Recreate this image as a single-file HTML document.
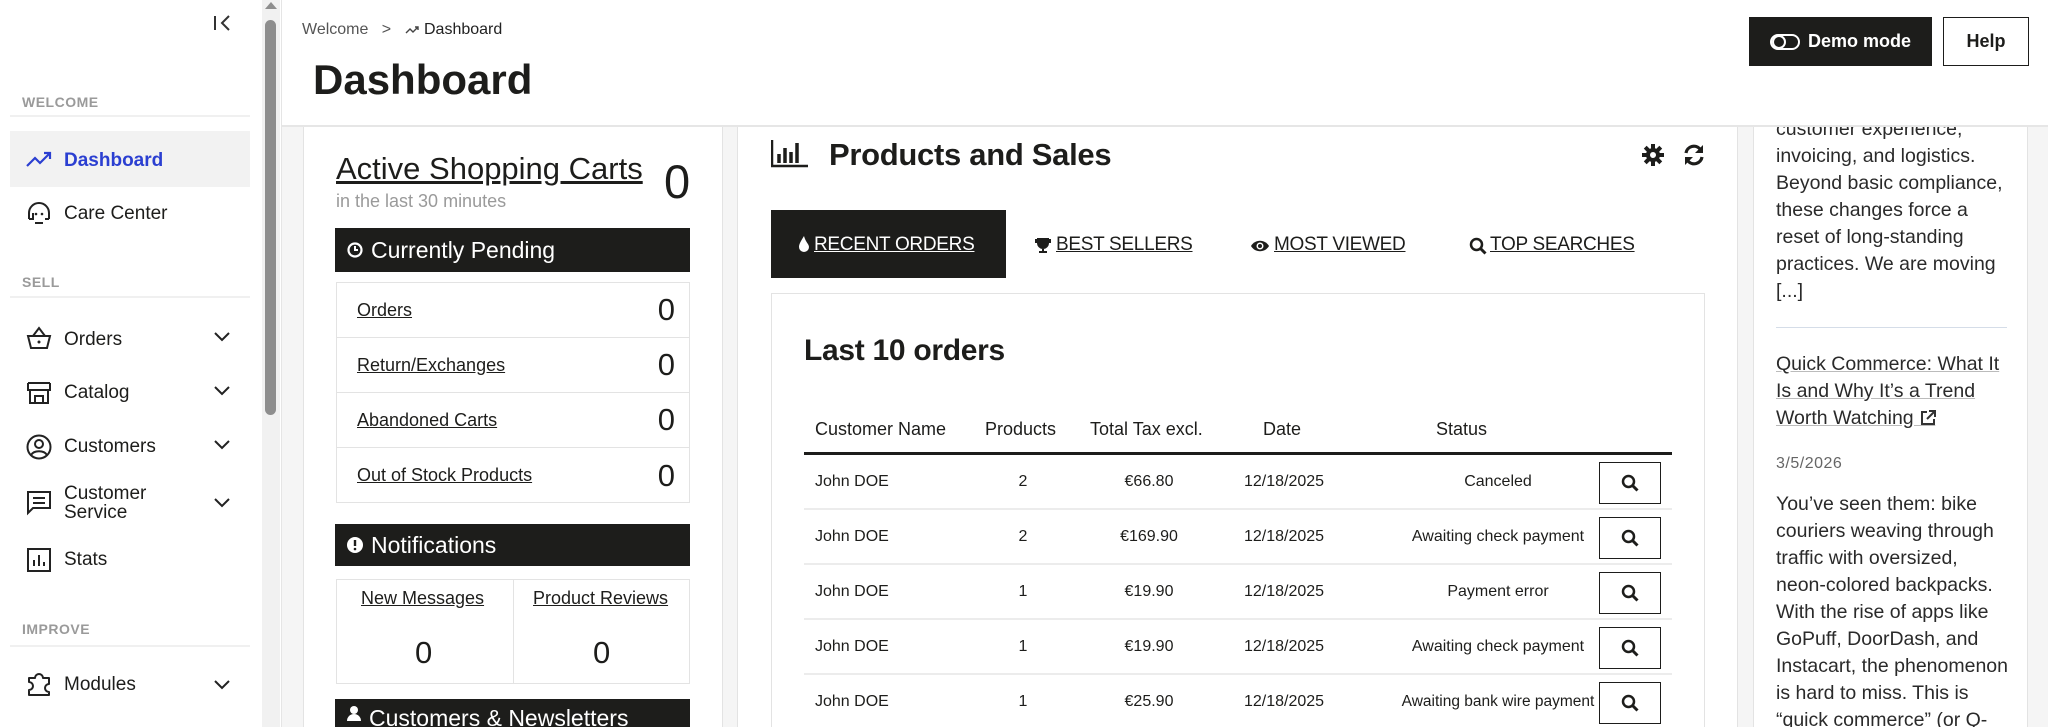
<!DOCTYPE html>
<html style="overflow:hidden"><head><meta charset="utf-8"><style>
*{box-sizing:border-box;margin:0;padding:0}
html,body{overflow:hidden}
body{width:2048px;height:727px;font-family:"Liberation Sans",sans-serif;color:#1d1d1b;background:#f5f5f5;position:relative}
.a{position:absolute}
.side{left:0;top:0;width:282px;height:727px;background:#fff;border-right:1px solid #e5e5e5}
.sec{left:22px;font-size:14px;font-weight:bold;color:#9a9a9a;letter-spacing:.5px}
.hr{left:10px;width:240px;height:2px;background:#f0f0f0}
.it{left:64px;font-size:19px;color:#1d1d1b}
.ic{left:25px}
.chev{left:213px}
.hdr{left:282px;top:0;width:1766px;height:127px;background:#fff;border-bottom:2px solid #e6e6e6}
.panel{background:#fff;border-left:1px solid #e3e3e3;border-right:1px solid #e3e3e3}
.bar{background:#1d1d1b;color:#fff;font-size:23px;padding-left:12px;display:flex;align-items:center;gap:8px}
.box{border:1px solid #e3e3e3;background:#fff}
.row{height:55px;border-bottom:1px solid #e3e3e3;display:flex;align-items:center;justify-content:space-between;padding:0 14px 0 20px}
.row a{font-size:18px;color:#1d1d1b;text-decoration:underline}
.row span{font-size:31px}
.tab{font-size:19px;text-decoration:underline;top:232px;color:#1d1d1b;letter-spacing:-.3px}
.tr{position:absolute;left:804px;width:868px;height:55px;border-bottom:2px solid #ececec;font-size:16px}
.tr div{position:absolute;top:0;line-height:54px;transform:translateX(-50%);white-space:nowrap}
.btn{position:absolute;left:795px;top:7px;width:62px;height:42px;border:1.5px solid #1d1d1b;display:flex;align-items:center;justify-content:center}
.rt{left:1776px;font-size:19.5px;line-height:27px;color:#2a2a2a;width:250px}
</style></head><body>

<!-- sidebar -->
<div class="a side"></div>
<svg class="a" style="left:212px;top:14px" width="20" height="18"><path d="M3 2v14M17 2l-7 7 7 7" stroke="#333" stroke-width="2" fill="none"/></svg>
<div class="a" style="left:262px;top:0;width:18px;height:727px;background:#f1f1f1"></div>
<div class="a" style="left:265px;top:20px;width:11px;height:395px;border-radius:6px;background:#8e8e8e"></div>
<svg class="a" style="left:263px;top:0" width="16" height="10"><path d="M2 9L8 2l6 7z" fill="#8e8e8e"/></svg>

<div class="a sec" style="top:94px">WELCOME</div>
<div class="a hr" style="top:115px"></div>
<div class="a" style="left:10px;top:131px;width:240px;height:56px;background:#f2f2f2"></div>
<svg class="a ic" style="top:150px" width="28" height="20"><path d="M2 16l8-8 5 5 10-10M19 3h6v6" stroke="#2b3fd1" stroke-width="2.2" fill="none"/></svg>
<div class="a it" style="top:150px;color:#2b3fd1;font-weight:bold">Dashboard</div>
<svg class="a ic" style="top:199px" width="28" height="28"><path d="M4 20v-6a10 10 0 0 1 20 0v6M4 20h4v-6M24 20h-4M10 24h8" stroke="#222" stroke-width="2" fill="none"/><circle cx="11" cy="15" r="1.3" fill="#222"/><circle cx="17" cy="15" r="1.3" fill="#222"/></svg>
<div class="a it" style="top:203px">Care Center</div>

<div class="a sec" style="top:274px">SELL</div>
<div class="a hr" style="top:296px"></div>
<svg class="a ic" style="top:325px" width="28" height="26"><path d="M3 11h22l-3 12H6z M8 11l6-8 6 8" stroke="#222" stroke-width="2" fill="none"/><circle cx="14" cy="17" r="1.5" fill="#222"/></svg>
<div class="a it" style="top:329px">Orders</div>
<svg class="a ic" style="top:379px" width="28" height="26"><path d="M3 4h22M3 4l-0 7h22V4M5 11v13h18V11M10 24v-7h8v7" stroke="#222" stroke-width="2" fill="none"/></svg>
<div class="a it" style="top:382px">Catalog</div>
<svg class="a ic" style="top:433px" width="28" height="28"><circle cx="14" cy="14" r="11.5" stroke="#222" stroke-width="2" fill="none"/><circle cx="14" cy="11" r="4" stroke="#222" stroke-width="2" fill="none"/><path d="M6 22c3-5 13-5 16 0" stroke="#222" stroke-width="2" fill="none"/></svg>
<div class="a it" style="top:436px">Customers</div>
<svg class="a ic" style="top:489px" width="28" height="28"><path d="M3 3h22v16H8l-5 5z M8 9h12M8 14h12" stroke="#222" stroke-width="2" fill="none"/></svg>
<div class="a it" style="top:484px;line-height:19px">Customer<br>Service</div>
<svg class="a ic" style="top:546px" width="28" height="28"><rect x="3" y="3" width="22" height="22" stroke="#222" stroke-width="2" fill="none"/><path d="M9 20v-6M14 20V9M19 20v-4" stroke="#222" stroke-width="2"/></svg>
<div class="a it" style="top:549px">Stats</div>
<div class="a sec" style="top:621px">IMPROVE</div>
<div class="a hr" style="top:645px"></div>
<svg class="a ic" style="top:670px" width="28" height="28"><path d="M4 8h6a4 4 0 0 1 8 0h6v6a4 4 0 0 0 0 8v3H4v-5a4 4 0 0 0 0-8z" stroke="#222" stroke-width="2" fill="none" stroke-linejoin="round"/></svg>
<div class="a it" style="top:674px">Modules</div>
<svg class="a chev" style="top:331px" width="18" height="12"><path d="M2 2l7 7 7-7" stroke="#222" stroke-width="2" fill="none"/></svg>
<svg class="a chev" style="top:385px" width="18" height="12"><path d="M2 2l7 7 7-7" stroke="#222" stroke-width="2" fill="none"/></svg>
<svg class="a chev" style="top:439px" width="18" height="12"><path d="M2 2l7 7 7-7" stroke="#222" stroke-width="2" fill="none"/></svg>
<svg class="a chev" style="top:497px" width="18" height="12"><path d="M2 2l7 7 7-7" stroke="#222" stroke-width="2" fill="none"/></svg>
<svg class="a chev" style="top:679px" width="18" height="12"><path d="M2 2l7 7 7-7" stroke="#222" stroke-width="2" fill="none"/></svg>

<!-- panels -->
<div class="a panel" style="left:303px;top:0;width:420px;height:727px"></div>
<div class="a panel" style="left:737px;top:0;width:1001px;height:727px"></div>
<div class="a panel" style="left:1753px;top:0;width:275px;height:727px"></div>

<!-- left column -->
<div class="a" style="left:336px;top:151px;font-size:31px;text-decoration:underline">Active Shopping Carts</div>
<div class="a" style="left:664px;top:154px;font-size:47px">0</div>
<div class="a" style="left:336px;top:191px;font-size:18px;color:#9a9a9a">in the last 30 minutes</div>
<div class="a bar" style="left:335px;top:228px;width:355px;height:44px"><svg width="16" height="16"><circle cx="8" cy="8" r="6.5" stroke="#fff" stroke-width="2.2" fill="none"/><path d="M8 4v4h3" stroke="#fff" stroke-width="2" fill="none"/></svg>Currently Pending</div>
<div class="a box" style="left:336px;top:282px;width:354px;height:221px">
<div class="row"><a>Orders</a><span>0</span></div>
<div class="row"><a>Return/Exchanges</a><span>0</span></div>
<div class="row"><a>Abandoned Carts</a><span>0</span></div>
<div class="row" style="border:0"><a>Out of Stock Products</a><span>0</span></div>
</div>
<div class="a bar" style="left:335px;top:524px;width:355px;height:42px"><svg width="16" height="16"><circle cx="8" cy="8" r="8" fill="#fff"/><path d="M8 3v6" stroke="#1d1d1b" stroke-width="2.4"/><circle cx="8" cy="12" r="1.3" fill="#1d1d1b"/></svg>Notifications</div>
<div class="a box" style="left:336px;top:579px;width:354px;height:105px">
<div class="a" style="left:176px;top:0;width:1px;height:103px;background:#e3e3e3"></div>
<div class="a" style="left:24px;top:8px;font-size:18px;text-decoration:underline">New Messages</div>
<div class="a" style="left:196px;top:8px;font-size:18px;text-decoration:underline">Product Reviews</div>
<div class="a" style="left:78px;top:55px;font-size:31px">0</div>
<div class="a" style="left:256px;top:55px;font-size:31px">0</div>
</div>
<div class="a bar" style="left:335px;top:699px;width:355px;height:40px;align-items:flex-start;padding-top:6px"><svg width="14" height="16"><circle cx="7" cy="5" r="4" fill="#fff"/><path d="M0 16a7 7 0 0 1 14 0z" fill="#fff"/></svg>Customers &amp; Newsletters</div>

<!-- middle column -->
<svg class="a" style="left:771px;top:140px" width="38" height="28"><path d="M1 0v26h36" stroke="#1d1d1b" stroke-width="2.5" fill="none"/><path d="M8 14v9M14 8v15M20 12v11M26 3v20" stroke="#1d1d1b" stroke-width="3.5"/></svg>
<div class="a" style="left:829px;top:137px;font-size:31px;font-weight:bold;letter-spacing:-.3px">Products and Sales</div>
<svg class="a" style="left:1642px;top:144px" width="22" height="22" viewBox="0 0 22 22"><g fill="#1d1d1b"><circle cx="11" cy="11" r="7"/><rect x="9" y="0" width="4" height="22"/><rect x="0" y="9" width="22" height="4"/><rect x="9" y="0" width="4" height="22" transform="rotate(45 11 11)"/><rect x="9" y="0" width="4" height="22" transform="rotate(-45 11 11)"/></g><circle cx="11" cy="11" r="3" fill="#fff"/></svg>
<svg class="a" style="left:1682px;top:143px" width="24" height="24" viewBox="0 0 24 24"><path d="M4 10a8 8 0 0 1 14-4M20 14a8 8 0 0 1-14 4" stroke="#1d1d1b" stroke-width="3.2" fill="none"/><path d="M21 2v8h-8zM3 22v-8h8z" fill="#1d1d1b"/></svg>
<div class="a" style="left:771px;top:210px;width:235px;height:68px;background:#1d1d1b"></div>
<svg class="a" style="left:798px;top:236px" width="12" height="16"><path d="M6 0C3 5 1 8 1 11a5 5 0 0 0 10 0C11 8 8 7 6 0z" fill="#fff"/></svg>
<div class="a tab" style="left:814px;top:234px;color:#fff">RECENT ORDERS</div>
<svg class="a" style="left:1034px;top:237px" width="18" height="17"><path d="M3 1h12v5a6 6 0 0 1-12 0zM1 2h3v4H1zM14 2h3v4h-3zM8 12h2v2h3v2H5v-2h3z" fill="#1d1d1b"/></svg>
<div class="a tab" style="left:1056px;top:234px">BEST SELLERS</div>
<svg class="a" style="left:1250px;top:239px" width="20" height="14"><path d="M1 7C5 0 15 0 19 7 15 14 5 14 1 7z" fill="#1d1d1b"/><circle cx="10" cy="7" r="3.5" fill="#fff"/><circle cx="10" cy="7" r="2" fill="#1d1d1b"/></svg>
<div class="a tab" style="left:1274px;top:234px">MOST VIEWED</div>
<svg class="a" style="left:1469px;top:237px" width="18" height="18"><circle cx="7.5" cy="7.5" r="5.5" stroke="#1d1d1b" stroke-width="2.5" fill="none"/><path d="M11.5 11.5l5 5" stroke="#1d1d1b" stroke-width="3"/></svg>
<div class="a tab" style="left:1490px;top:234px">TOP SEARCHES</div>

<div class="a" style="left:771px;top:293px;width:934px;height:440px;border:1px solid #e3e3e3;background:#fff"></div>
<div class="a" style="left:804px;top:334px;font-size:30px;font-weight:bold;letter-spacing:-.3px">Last 10 orders</div>
<div class="a" style="left:815px;top:419px;font-size:18px">Customer Name</div>
<div class="a" style="left:985px;top:419px;font-size:18px">Products</div>
<div class="a" style="left:1090px;top:419px;font-size:18px">Total Tax excl.</div>
<div class="a" style="left:1263px;top:419px;font-size:18px">Date</div>
<div class="a" style="left:1436px;top:419px;font-size:18px">Status</div>
<div class="a" style="left:804px;top:452px;width:868px;height:3px;background:#1d1d1b"></div>

<div class="tr" style="top:455px"><div style="left:11px;transform:none">John DOE</div><div style="left:219px">2</div><div style="left:345px">€66.80</div><div style="left:480px">12/18/2025</div><div style="left:694px">Canceled</div><span class="btn"><svg width="18" height="18"><circle cx="7.5" cy="7.5" r="5.5" stroke="#1d1d1b" stroke-width="2.5" fill="none"/><path d="M11.5 11.5l5 5" stroke="#1d1d1b" stroke-width="3"/></svg></span></div>
<div class="tr" style="top:510px"><div style="left:11px;transform:none">John DOE</div><div style="left:219px">2</div><div style="left:345px">€169.90</div><div style="left:480px">12/18/2025</div><div style="left:694px">Awaiting check payment</div><span class="btn"><svg width="18" height="18"><circle cx="7.5" cy="7.5" r="5.5" stroke="#1d1d1b" stroke-width="2.5" fill="none"/><path d="M11.5 11.5l5 5" stroke="#1d1d1b" stroke-width="3"/></svg></span></div>
<div class="tr" style="top:565px"><div style="left:11px;transform:none">John DOE</div><div style="left:219px">1</div><div style="left:345px">€19.90</div><div style="left:480px">12/18/2025</div><div style="left:694px">Payment error</div><span class="btn"><svg width="18" height="18"><circle cx="7.5" cy="7.5" r="5.5" stroke="#1d1d1b" stroke-width="2.5" fill="none"/><path d="M11.5 11.5l5 5" stroke="#1d1d1b" stroke-width="3"/></svg></span></div>
<div class="tr" style="top:620px"><div style="left:11px;transform:none">John DOE</div><div style="left:219px">1</div><div style="left:345px">€19.90</div><div style="left:480px">12/18/2025</div><div style="left:694px">Awaiting check payment</div><span class="btn"><svg width="18" height="18"><circle cx="7.5" cy="7.5" r="5.5" stroke="#1d1d1b" stroke-width="2.5" fill="none"/><path d="M11.5 11.5l5 5" stroke="#1d1d1b" stroke-width="3"/></svg></span></div>
<div class="tr" style="top:675px"><div style="left:11px;transform:none">John DOE</div><div style="left:219px">1</div><div style="left:345px">€25.90</div><div style="left:480px">12/18/2025</div><div style="left:694px;font-size:15.5px">Awaiting bank wire payment</div><span class="btn"><svg width="18" height="18"><circle cx="7.5" cy="7.5" r="5.5" stroke="#1d1d1b" stroke-width="2.5" fill="none"/><path d="M11.5 11.5l5 5" stroke="#1d1d1b" stroke-width="3"/></svg></span></div>

<!-- right column -->
<div class="a rt" style="top:116px">customer experience,<br>invoicing, and logistics.<br>Beyond basic compliance,<br>these changes force a<br>reset of long-standing<br>practices. We are moving<br>[...]</div>
<div class="a" style="left:1776px;top:327px;width:231px;height:1px;background:#d5dde8"></div>
<div class="a rt" style="top:351px;text-decoration:underline;text-decoration-color:#bbb">Quick Commerce: What It<br>Is and Why It’s a Trend<br>Worth Watching &nbsp;&nbsp;&nbsp;</div>
<svg class="a" style="left:1920px;top:410px" width="16" height="16"><path d="M7 2H2v12h12V9M9 1h6v6M15 1L7 9" stroke="#333" stroke-width="2" fill="none"/></svg>
<div class="a" style="left:1776px;top:455px;font-size:16px;color:#666;letter-spacing:.5px">3/5/2026</div>
<div class="a rt" style="top:491px">You’ve seen them: bike<br>couriers weaving through<br>traffic with oversized,<br>neon-colored backpacks.<br>With the rise of apps like<br>GoPuff, DoorDash, and<br>Instacart, the phenomenon<br>is hard to miss. This is<br>“quick commerce” (or Q-</div>

<!-- header -->
<div class="a hdr"></div>
<div class="a" style="left:302px;top:21px;font-size:16px;color:#555">Welcome&nbsp;&nbsp;&nbsp;&gt;</div>
<svg class="a" style="left:405px;top:25px" width="14" height="10"><path d="M1 8l4-4 3 3 5-5M10 2h3v3" stroke="#444" stroke-width="1.4" fill="none"/></svg>
<div class="a" style="left:424px;top:21px;font-size:16px;color:#222">Dashboard</div>
<div class="a" style="left:313px;top:56px;font-size:42px;font-weight:bold">Dashboard</div>
<div class="a" style="left:1749px;top:17px;width:183px;height:49px;background:#1d1d1b;color:#fff;font-weight:bold;font-size:18px;display:flex;align-items:center;justify-content:center;gap:8px"><svg width="30" height="18"><rect x="1" y="2" width="28" height="14" rx="7" stroke="#fff" stroke-width="2" fill="none"/><circle cx="9" cy="9" r="6" stroke="#fff" stroke-width="2" fill="none"/></svg>Demo mode</div>
<div class="a" style="left:1943px;top:17px;width:86px;height:49px;border:1.5px solid #1d1d1b;background:#fff;font-weight:bold;font-size:18px;display:flex;align-items:center;justify-content:center">Help</div>
</body></html>
